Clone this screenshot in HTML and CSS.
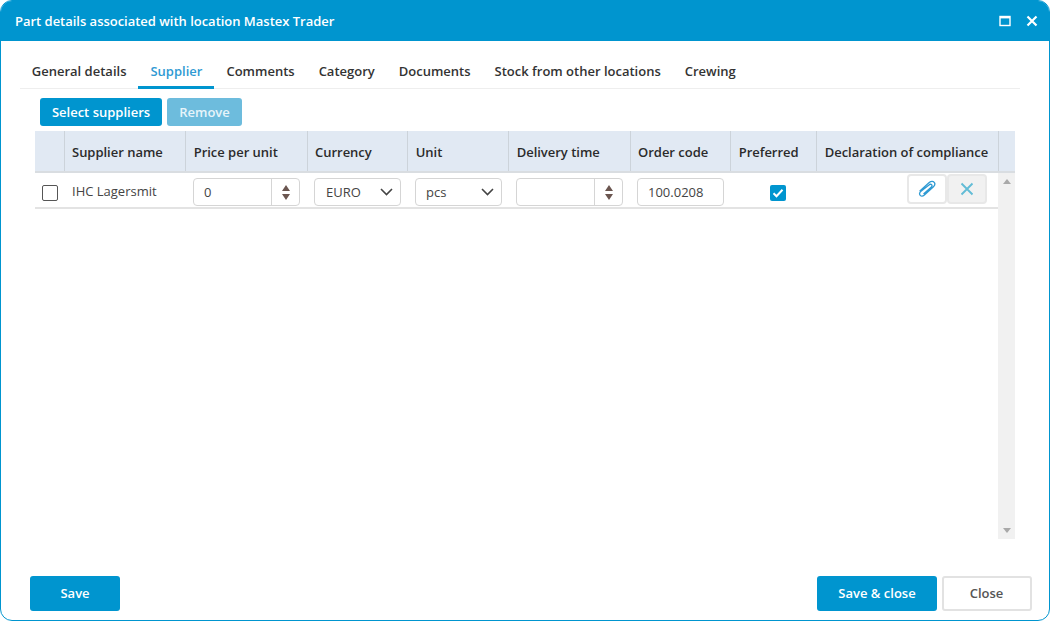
FILE: index.html
```html
<!DOCTYPE html>
<html lang="en">
<head>
<meta charset="utf-8">
<title>Part details</title>
<link rel="stylesheet" href="styles.css">
</head>
<body>
<div class="window">
  <header class="titlebar">
    <h1 class="title">Part details associated with location Mastex Trader</h1>
    <div class="win-actions">
      <svg class="win-icon" width="12" height="12" viewBox="0 0 12 12"><rect x="1" y="1.5" width="10" height="9" fill="none" stroke="#fff" stroke-width="1.4"/><rect x="1" y="1" width="10" height="2.4" fill="#fff"/></svg>
      <svg class="win-icon" width="12" height="12" viewBox="0 0 12 12"><path d="M1.5 1.5l9 9M10.5 1.5l-9 9" stroke="#fff" stroke-width="2.2" fill="none"/></svg>
    </div>
  </header>
  <nav class="tabs">
    <a class="tab">General details</a>
    <a class="tab active">Supplier</a>
    <a class="tab">Comments</a>
    <a class="tab">Category</a>
    <a class="tab">Documents</a>
    <a class="tab">Stock from other locations</a>
    <a class="tab">Crewing</a>
  </nav>
  <div class="toolbar">
    <button class="btn primary small sel">Select suppliers</button>
    <button class="btn primary small disabled rem">Remove</button>
  </div>
  <section class="grid">
    <div class="row head">
      <div class="cell"></div>
      <div class="cell tight">Supplier name</div>
      <div class="cell">Price per unit</div>
      <div class="cell tight">Currency</div>
      <div class="cell">Unit</div>
      <div class="cell">Delivery time</div>
      <div class="cell tight">Order code</div>
      <div class="cell">Preferred</div>
      <div class="cell">Declaration of compliance</div>
      <div class="cell last"></div>
    </div>
    <div class="content">
      <div class="rows">
        <div class="row data">
          <div class="cell center"><span class="check"></span></div>
          <div class="cell name">IHC Lagersmit</div>
          <div class="cell"><div class="field spin"><span class="val">0</span><span class="arrows"><svg width="8" height="15" viewBox="0 0 8 15"><path d="M4 0l4 6H0zM4 15L0 9h8z" fill="#6b5650"/></svg></span></div></div>
          <div class="cell"><div class="field select"><span class="val">EURO</span><svg width="13" height="8" viewBox="0 0 13 8"><path d="M1 1l5.500 5.500L12 1" fill="none" stroke="#444" stroke-width="1.6"/></svg></div></div>
          <div class="cell"><div class="field select"><span class="val unit">pcs</span><svg width="13" height="8" viewBox="0 0 13 8"><path d="M1 1l5.500 5.500L12 1" fill="none" stroke="#444" stroke-width="1.6"/></svg></div></div>
          <div class="cell"><div class="field spin"><span class="val"></span><span class="arrows"><svg width="8" height="15" viewBox="0 0 8 15"><path d="M4 0l4 6H0zM4 15L0 9h8z" fill="#6b5650"/></svg></span></div></div>
          <div class="cell"><div class="field code"><span class="val">100.0208</span></div></div>
          <div class="cell center pref"><span class="check on"><svg width="12" height="10" viewBox="0 0 12 10"><path d="M1.500 5.200l3 3L10.500 1.800" fill="none" stroke="#fff" stroke-width="2"/></svg></span></div>
          <div class="cell actions">
            <button class="icon-btn attach"><svg width="20" height="18" viewBox="0 0 20 18"><path d="M2.600 11.200L12.200 2.600c1.900-1.600 4-1.500 5-.3s.8 3-1 4.600L7.400 15c-1.500 1.300-3.200 1.400-4.200.4s-.9-2.600.5-3.900L12 4.900c.9-.8 2-.9 2.600-.2s.4 1.700-.5 2.500L6.500 13.900" fill="none" stroke="#2f9ad3" stroke-width="1.300"/></svg></button>
            <button class="icon-btn clear"><svg width="14" height="14" viewBox="0 0 14 14"><path d="M1.500 1.500l11 11M12.500 1.500l-11 11" stroke="#62bcd6" stroke-width="1.900" fill="none"/></svg></button>
          </div>
        </div>
      </div>
      <div class="scrollbar">
        <svg width="8" height="5" viewBox="0 0 8 5"><path d="M4 0l4 5H0z" fill="#a9a9a9"/></svg>
        <svg width="8" height="5" viewBox="0 0 8 5"><path d="M0 0h8L4 5z" fill="#a9a9a9"/></svg>
      </div>
    </div>
  </section>
  <footer class="footer">
    <button class="btn primary large save">Save</button>
    <div class="footer-right">
      <button class="btn primary large saveclose">Save &amp; close</button>
      <button class="btn outline large close">Close</button>
    </div>
  </footer>
</div>
</body>
</html>
```
FILE: styles.css
```css
* { box-sizing: border-box; }
html, body { margin: 0; height: 100%; background: #fff; }
body { font-family: "Open Sans", "Liberation Sans", sans-serif; font-size: 13px; color: #333; overflow: hidden; }
.window { width: 1050px; height: 621px; border: 1px solid #0095cf; border-radius: 12px; overflow: hidden; display: flex; flex-direction: column; background: #fff; }
.titlebar { height: 40px; flex: none; background: #0095cf; display: flex; align-items: center; justify-content: space-between; padding: 0 11px 0 14px; }
.title { margin: 0; font-size: 13px; font-weight: 600; color: #fff; letter-spacing: -0.02px; }
.win-actions { display: flex; gap: 15px; align-items: center; }
.win-icon { display: block; }
.tabs { display: flex; margin: 14px 29px 0 18.8px; height: 34px; border-bottom: 1px solid #eee; flex: none; }
.tab { padding: 7px 12px 0; font-weight: 600; color: #333; height: 34px; line-height: 18px; }
.tab.active { color: #2f9ad3; border-bottom: 3px solid #0095cf; }
.toolbar { display: flex; gap: 5px; margin: 9px 0 5px 39px; flex: none; }
.btn { font-family: inherit; font-weight: 600; font-size: 13px; border-radius: 3px; border: 0; padding: 0; }
.primary { background: #0095cf; color: #fff; }
.small { height: 28px; }
.sel { width: 122px; }
.rem { width: 75px; }
.disabled { background: #6dbcdd; color: #e6f4fa; }
.grid { margin-left: 34px; width: 980px; flex: none; }
.row { display: grid; grid-template-columns: 30px 121px 121px 101px 101px 121px 101px 86px 181px; }
.head { grid-template-columns: 30px 121px 122px 100px 101px 122px 100px 86px 182px 16px; height: 42px; background: #e1e9f3; border-bottom: 2px solid #d9dde1; font-weight: 600; color: #2b2b2b; letter-spacing: -0.02px; }
.head .cell { display: flex; align-items: center; padding: 2px 0 0 7.7px; border-right: 1px solid #ccd3da; }
.head .cell.tight { padding-left: 7px; }
.head .cell.last { border-right: 0; }
.content { display: flex; height: 366px; }
.rows { width: 963px; }
.data { height: 36px; padding-top: 4px; border-bottom: 2px solid #e3e3e3; align-items: center; }
.data .cell { padding-left: 7px; }
.data .name { color: #444; padding-bottom: 3px; }
.data .center { display: flex; justify-content: center; padding-left: 0; }
.data .center.pref { padding-left: 8px; }
.field { height: 28px; border: 1px solid #d5d5d5; border-radius: 4px; display: flex; align-items: center; background: #fff; color: #444; }
.val { flex: 1; padding-left: 11px; }
.spin { width: 107px; }
.spin .val { padding-left: 10px; }
.val.unit { padding-left: 10px; }
.arrows { width: 28px; height: 26px; border-left: 1px solid #d5d5d5; display: flex; align-items: center; justify-content: center; }
.arrows svg { display: block; }
.select { width: 87px; padding-right: 7px; }
.select svg { display: block; }
.code { width: 87px; }
.code .val { padding-left: 10px; }
.check { width: 16px; height: 16px; margin-top: 2px; border: 1.5px solid #555; border-radius: 2px; display: flex; align-items: center; justify-content: center; background: #fff; }
.check.on { background: #0095cf; border: 0; border-radius: 2px; }
.actions { display: flex; justify-content: flex-end; padding-right: 11px; margin-top: -7px; }
.icon-btn { width: 40px; height: 30px; padding: 0; border: 2px solid #e8e8e8; border-radius: 4px; background: #fff; display: flex; align-items: center; justify-content: center; }
.icon-btn.clear { background: #f1f1f1; width: 40px; }
.scrollbar { width: 17px; background: #f1f1f1; display: flex; flex-direction: column; justify-content: space-between; align-items: center; padding: 6px 0 6px; }
.footer { margin-top: 37px; display: flex; justify-content: space-between; padding: 0 17px 0 29px; flex: none; }
.footer-right { display: flex; gap: 5px; }
.large { height: 35px; padding-bottom: 2px; }
.save { width: 90px; }
.saveclose { width: 120px; }
.outline { background: #fff; border: 2px solid #e2e2e2; color: #555; }
.close { width: 90px; padding-right: 1px; }
```
